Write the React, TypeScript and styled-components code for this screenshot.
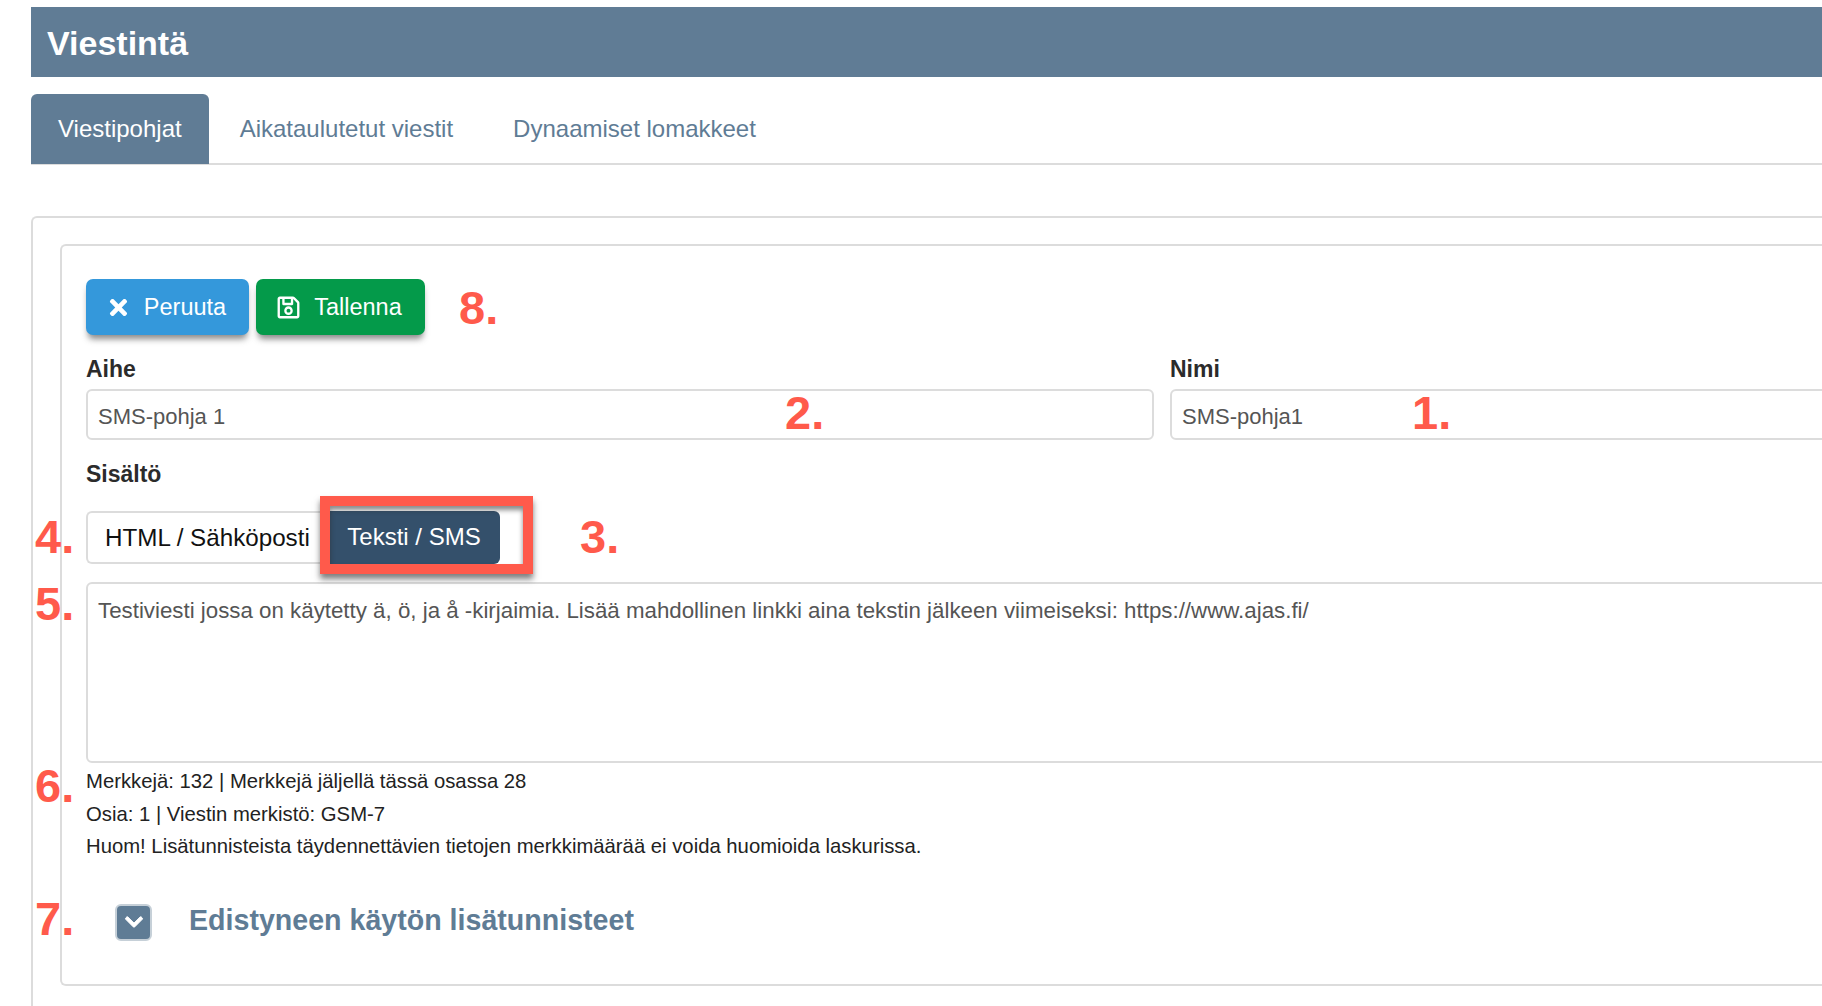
import styled, { createGlobalStyle } from "styled-components";
import { FaTimes, FaRegSave, FaChevronDown } from "react-icons/fa";

const GlobalStyle = createGlobalStyle`
  html, body {
    margin: 0;
    padding: 0;
    background: #fff;
    overflow: hidden;
    font-family: "Liberation Sans", Arial, sans-serif;
  }
`;

const Page = styled.div`
  width: 1960px;
  height: 1006px;
  padding: 7px 0 0 31px;
  box-sizing: border-box;
`;

const Header = styled.h1`
  margin: 0;
  height: 70px;
  padding-left: 16px;
  background: #607c95;
  color: #fff;
  font-size: 34px;
  font-weight: 700;
  line-height: 72px;
`;

const Tabs = styled.div`
  display: flex;
  margin-top: 17px;
  border-bottom: 2px solid #dcdcdc;
`;

const Tab = styled.div<{ $active?: boolean }>`
  height: 70px;
  margin-bottom: -1px;
  line-height: 70px;
  padding: 0 27px;
  margin-right: 4px;
  font-size: 24px;
  border-radius: 6px 6px 0 0;
  color: ${(p) => (p.$active ? "#fff" : "#5f7c95")};
  background: ${(p) => (p.$active ? "#607c95" : "transparent")};

  &:nth-child(3) {
    margin-left: 2px;
  }
`;

const OuterPanel = styled.div`
  margin-top: 51px;
  padding: 26px 0 0 27px;
  height: 800px;
  border: 2px solid #dcdcdc;
  border-right: 0;
  border-bottom: 0;
  border-radius: 6px 0 0 0;
`;

const InnerPanel = styled.div`
  height: 742px;
  padding: 33px 0 0 24px;
  box-sizing: border-box;
  border: 2px solid #dcdcdc;
  border-right: 0;
  border-radius: 6px 0 0 6px;
`;

const Annotation = styled.span`
  color: #ff5a4b;
  font-size: 47px;
  font-weight: 700;
  line-height: 48px;
`;

const GutterMark = styled(Annotation)<{ $top: number }>`
  position: absolute;
  left: -51px;
  top: ${(p) => p.$top}px;
`;

const InputMark = styled(Annotation)<{ $left: number }>`
  position: absolute;
  top: 0;
  left: ${(p) => p.$left}px;
`;

const ButtonRow = styled.div`
  display: flex;
  align-items: center;
  gap: 7px;
`;

const ActionButton = styled.button<{ $bg: string; $width: number }>`
  display: flex;
  align-items: center;
  justify-content: center;
  gap: 13px;
  width: ${(p) => p.$width}px;
  height: 56px;
  padding: 0 3px 0 0;
  border: 0;
  border-radius: 7px;
  color: #fff;
  font-family: inherit;
  font-size: 23.5px;
  background: ${(p) => p.$bg};
  box-shadow: 0 6px 6px -2px rgba(60, 60, 60, 0.6);
`;

const ButtonMark = styled(Annotation)`
  margin-left: 27px;
  padding-top: 1px;
`;

const FieldRow = styled.div`
  display: flex;
  gap: 16px;
  margin-top: 20px;
`;

const Field = styled.div<{ $width: number }>`
  width: ${(p) => p.$width}px;
  flex: none;
`;

const Label = styled.div`
  height: 34px;
  font-size: 23px;
  font-weight: 700;
  line-height: 28px;
  color: #2b2b2b;
`;

const InputWrap = styled.div`
  position: relative;
`;

const TextInput = styled.input`
  display: block;
  width: 100%;
  height: 51px;
  box-sizing: border-box;
  padding: 5px 10px 0;
  border: 2px solid #dcdcdc;
  border-radius: 6px;
  outline: 0;
  font-family: inherit;
  font-size: 22px;
  color: #555;
`;

const ContentLabel = styled(Label)`
  margin-top: 20px;
  height: 51px;
`;

const MarkedArea = styled.div`
  position: relative;
`;

const ToggleRow = styled.div`
  display: flex;
  align-items: flex-start;
  height: 53px;
  margin-bottom: 18px;
`;

const ToggleLight = styled.div`
  width: 244px;
  height: 53px;
  box-sizing: border-box;
  padding-left: 17px;
  border: 2px solid #dcdcdc;
  border-right: 0;
  border-radius: 6px 0 0 6px;
  font-size: 24.2px;
  line-height: 49px;
  color: #111;
`;

const ToggleDark = styled.div`
  width: 170px;
  height: 53px;
  box-sizing: border-box;
  padding-right: 2px;
  text-align: center;
  border-radius: 0 6px 6px 0;
  background: #34506b;
  color: #fff;
  font-size: 24px;
  line-height: 51px;
`;

const Highlight = styled.div`
  position: absolute;
  left: 234px;
  top: -15px;
  width: 213px;
  height: 78px;
  box-sizing: border-box;
  border: 10px solid #ff5a4b;
  box-shadow: 0 5px 6px rgba(40, 40, 40, 0.6), inset 0 4px 5px rgba(40, 40, 40, 0.55);
`;

const ToggleMark = styled(Annotation)`
  position: absolute;
  left: 494px;
  top: 2px;
`;

const MessageBox = styled.textarea`
  display: block;
  width: 100%;
  height: 181px;
  box-sizing: border-box;
  padding: 12px 10px;
  border: 2px solid #dcdcdc;
  border-radius: 6px;
  outline: 0;
  resize: none;
  font-family: inherit;
  font-size: 22.3px;
  line-height: 30px;
  color: #555;
`;

const CounterBlock = styled.div`
  margin-top: 2px;
  font-size: 20.3px;
  line-height: 32.5px;
  color: #222;
`;

const Advanced = styled.div`
  display: flex;
  align-items: center;
  gap: 37px;
  margin-top: 38px;
  padding-left: 29px;
`;

const ChevronButton = styled.div`
  display: flex;
  align-items: center;
  justify-content: center;
  width: 37px;
  height: 37px;
  margin-top: 3px;
  box-sizing: border-box;
  border: 2px solid #c6d0d8;
  border-radius: 6px;
  background: #5f7c95;
  color: #fff;
  font-size: 20px;

  svg {
    stroke: currentColor;
    stroke-width: 25;
  }
`;

const AdvancedTitle = styled.h2`
  margin: 0;
  font-size: 28.6px;
  font-weight: 700;
  color: #5f7c95;
`;

const App = () => {
  return (
    <>
      <GlobalStyle />
      <Page>
        <Header>Viestintä</Header>
        <Tabs>
          <Tab $active>Viestipohjat</Tab>
          <Tab>Aikataulutetut viestit</Tab>
          <Tab>Dynaamiset lomakkeet</Tab>
        </Tabs>
        <OuterPanel>
          <InnerPanel>
            <ButtonRow>
              <ActionButton $bg="#3498db" $width={163}>
                <FaTimes size={25} />
                Peruuta
              </ActionButton>
              <ActionButton $bg="#049a4a" $width={169}>
                <FaRegSave size={25} />
                Tallenna
              </ActionButton>
              <ButtonMark>8.</ButtonMark>
            </ButtonRow>
            <FieldRow>
              <Field $width={1068}>
                <Label>Aihe</Label>
                <InputWrap>
                  <TextInput readOnly value="SMS-pohja 1" />
                  <InputMark $left={699}>2.</InputMark>
                </InputWrap>
              </Field>
              <Field $width={700}>
                <Label>Nimi</Label>
                <InputWrap>
                  <TextInput readOnly value="SMS-pohja1" />
                  <InputMark $left={242}>1.</InputMark>
                </InputWrap>
              </Field>
            </FieldRow>
            <ContentLabel>Sisältö</ContentLabel>
            <MarkedArea>
              <GutterMark $top={2}>4.</GutterMark>
              <GutterMark $top={69}>5.</GutterMark>
              <GutterMark $top={251}>6.</GutterMark>
              <GutterMark $top={384}>7.</GutterMark>
              <ToggleRow>
                <ToggleLight>HTML / Sähköposti</ToggleLight>
                <ToggleDark>Teksti / SMS</ToggleDark>
              </ToggleRow>
              <Highlight />
              <ToggleMark>3.</ToggleMark>
              <MessageBox
                readOnly
                value="Testiviesti jossa on käytetty ä, ö, ja å -kirjaimia. Lisää mahdollinen linkki aina tekstin jälkeen viimeiseksi: https://www.ajas.fi/"
              />
              <CounterBlock>
                <div>Merkkejä: 132 | Merkkejä jäljellä tässä osassa 28</div>
                <div>Osia: 1 | Viestin merkistö: GSM-7</div>
                <div>
                  Huom! Lisätunnisteista täydennettävien tietojen merkkimäärää ei voida huomioida laskurissa.
                </div>
              </CounterBlock>
              <Advanced>
                <ChevronButton>
                  <FaChevronDown />
                </ChevronButton>
                <AdvancedTitle>Edistyneen käytön lisätunnisteet</AdvancedTitle>
              </Advanced>
            </MarkedArea>
          </InnerPanel>
        </OuterPanel>
      </Page>
    </>
  );
};

export default App;
